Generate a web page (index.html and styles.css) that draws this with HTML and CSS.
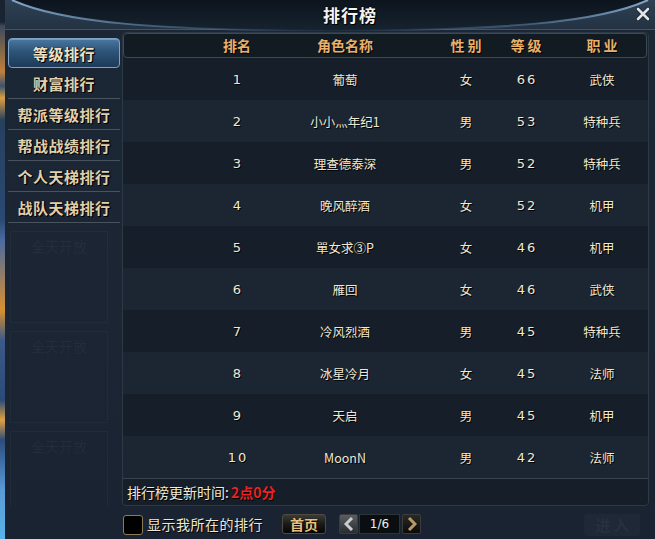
FILE: index.html
```html
<!DOCTYPE html>
<html lang="zh-CN">
<head>
<meta charset="utf-8">
<title>排行榜</title>
<link rel="stylesheet" href="styles.css">
</head>
<body>
<div class="window">
  <header class="titlebar">
    <svg class="arc" width="655" height="31" viewBox="0 0 655 31">
      <defs>
        <linearGradient id="arcStroke" x1="0" y1="0" x2="1" y2="0">
          <stop offset="0" stop-color="#8fb4d8" stop-opacity="0.9"/>
          <stop offset="0.25" stop-color="#5f86ad" stop-opacity="0.5"/>
          <stop offset="0.5" stop-color="#3e5a78" stop-opacity="0.2"/>
          <stop offset="0.8" stop-color="#5f86ad" stop-opacity="0.5"/>
          <stop offset="1" stop-color="#8fb4d8" stop-opacity="0.9"/>
        </linearGradient>
        <linearGradient id="arcFill" x1="0" y1="0" x2="0" y2="1">
          <stop offset="0" stop-color="#0c141d"/>
          <stop offset="1" stop-color="#172330"/>
        </linearGradient>
      </defs>
      <path d="M 12 0 C 60 22 150 30 330 31 C 510 30 600 22 648 0 Z" fill="url(#arcFill)"/>
      <path d="M 12 0 C 60 22 150 30 330 31 C 510 30 600 22 648 0" fill="none" stroke="url(#arcStroke)" stroke-width="2"/>
    </svg>
    <h1 class="title">排行榜</h1>
    <span class="close">
      <svg width="14" height="14" viewBox="0 0 14 14">
        <path d="M2 2 L12 12 M12 2 L2 12" stroke="#1a222c" stroke-width="4.5" stroke-linecap="round"/>
        <path d="M2 2 L12 12 M12 2 L2 12" stroke="#dfe4ea" stroke-width="2.6" stroke-linecap="round"/>
      </svg>
    </span>
  </header>

  <div class="content">
    <nav class="tabs">
      <div class="tab active">等级排行</div>
      <div class="tab">财富排行</div>
      <div class="tab">帮派等级排行</div>
      <div class="tab">帮战战绩排行</div>
      <div class="tab">个人天梯排行</div>
      <div class="tab">战队天梯排行</div>
      <div class="ghost">
        <div class="ghost-item">全天开放</div>
        <div class="ghost-item">全天开放</div>
        <div class="ghost-item">全天开放</div>
      </div>
    </nav>

    <section class="panel">
      <div class="thead">
        <span>排名</span><span>角色名称</span><span>性 别</span><span>等 级</span><span>职 业</span>
      </div>
      <div class="tbody">
        <div class="row"><span class="num">1</span><span>葡萄</span><span>女</span><span class="num">66</span><span>武侠</span></div>
        <div class="row"><span class="num">2</span><span>小小灬年纪1</span><span>男</span><span class="num">53</span><span>特种兵</span></div>
        <div class="row"><span class="num">3</span><span>理查德泰深</span><span>男</span><span class="num">52</span><span>特种兵</span></div>
        <div class="row"><span class="num">4</span><span>晚风醉酒</span><span>女</span><span class="num">52</span><span>机甲</span></div>
        <div class="row"><span class="num">5</span><span>單女求③P</span><span>女</span><span class="num">46</span><span>机甲</span></div>
        <div class="row"><span class="num">6</span><span>雁回</span><span>女</span><span class="num">46</span><span>武侠</span></div>
        <div class="row"><span class="num">7</span><span>冷风烈酒</span><span>男</span><span class="num">45</span><span>特种兵</span></div>
        <div class="row"><span class="num">8</span><span>冰星冷月</span><span>女</span><span class="num">45</span><span>法师</span></div>
        <div class="row"><span class="num">9</span><span>天启</span><span>男</span><span class="num">45</span><span>机甲</span></div>
        <div class="row"><span class="num">10</span><span>MoonN</span><span>男</span><span class="num">42</span><span>法师</span></div>
      </div>
      <div class="update">排行榜更新时间:<span class="red">2点0分</span></div>
    </section>
  </div>

  <footer class="bottombar">
    <span class="checkbox"></span>
    <span class="check-label">显示我所在的排行</span>
    <span class="btn-first">首页</span>
    <span class="pager">
      <span class="arrow prev">
        <svg width="10" height="14" viewBox="0 0 10 14"><path d="M8 1 L2 7 L8 13" fill="none" stroke="#c9ccd0" stroke-width="3"/></svg>
      </span>
      <span class="pagenum">1/6</span>
      <span class="arrow next">
        <svg width="10" height="14" viewBox="0 0 10 14"><path d="M2 1 L8 7 L2 13" fill="none" stroke="#b89a68" stroke-width="3"/></svg>
      </span>
    </span>
    <span class="enter">进 入</span>
  </footer>
</div>
</body>
</html>
```

FILE: styles.css
```css
html, body {
  margin: 0;
  padding: 0;
}

body {
  width: 655px;
  height: 539px;
  overflow: hidden;
  font-family: "Noto Sans CJK SC", "Noto Sans", sans-serif;
  background:
    linear-gradient(to bottom,
      #1a2330 0, #1a2330 22px, #3b4a5c 26px, #c0803a 72px, #3a5372 86px,
      #dca040 98px, #26405e 120px, #2a4a74 220px, #4a6aa0 240px,
      #d89030 310px, #3c5a88 340px, #2a4a78 400px, #e0a040 420px,
      #2c4c7c 440px, #5a9ad8 490px, #58b4e8 539px) 0 0 / 5px 100% no-repeat,
    linear-gradient(to bottom, #1c2736, #1b2533 60%, #1a2331);
}

.window {
  width: 655px;
  height: 539px;
  display: grid;
  grid-template-rows: 30px 476px 33px;
  overflow: hidden;
}

/* ---------- title bar ---------- */
.titlebar {
  position: relative;
  display: flex;
  align-items: center;
  justify-content: center;
  background: linear-gradient(to bottom, #2f4154, #223243);
  border-bottom: 1px solid #3d5670;
  box-sizing: border-box;
  margin-left: 5px;
}

.arc {
  position: absolute;
  left: -5px;
  top: 0;
}

.title {
  position: relative;
  margin: 0;
  padding-left: 40px;
  font-size: 17px;
  font-weight: 700;
  color: #f4f4f4;
  letter-spacing: 1px;
  text-shadow: 1px 1px 0 #000, 0 0 2px #000;
  line-height: 30px;
}

.close {
  position: absolute;
  right: 5px;
  top: 7px;
  width: 14px;
  height: 14px;
  display: block;
}

.close svg {
  display: block;
}

/* ---------- content ---------- */
.content {
  display: grid;
  grid-template-columns: 120px 527px;
  column-gap: 2px;
  overflow: hidden;
}

.tabs {
  padding: 8px 0 0 8px;
  display: flex;
  flex-direction: column;
  overflow: hidden;
  min-height: 0;
}

.tab {
  flex: none;
  height: 30px;
  border-bottom: 1px solid #48535e;
  display: flex;
  align-items: center;
  justify-content: center;
  font-size: 15px;
  font-weight: 700;
  color: #e2d0ac;
  letter-spacing: 0.5px;
  text-shadow: 1px 1px 0 #000, 1px 0 1px #000;
}

.tab.active {
  box-sizing: border-box;
  height: 30px;
  border: 1px solid #7ea3c4;
  border-radius: 4px;
  background: linear-gradient(to bottom, #4b77a0 0%, #2d5478 45%, #1d3a58 100%);
  box-shadow: inset 0 1px 0 rgba(200, 225, 250, 0.35);
  color: #efe2c2;
}

.ghost {
  flex: none;
  margin-top: 8px;
  display: flex;
  flex-direction: column;
  gap: 8px;
  padding-left: 2px;
}

.ghost-item {
  width: 98px;
  height: 92px;
  box-sizing: border-box;
  border: 1px solid rgba(70, 90, 110, 0.14);
  font-size: 14px;
  color: rgba(120, 140, 160, 0.1);
  text-align: center;
  padding-top: 4px;
}

/* ---------- panel ---------- */
.panel {
  margin-top: 2px;
  height: 474px;
  box-sizing: border-box;
  border: 1px solid #2c3946;
  border-radius: 4px;
  display: flex;
  flex-direction: column;
  background: #19232f;
}

.thead {
  flex: none;
  height: 25px;
  box-sizing: border-box;
  border: 1px solid #3b4955;
  border-radius: 4px;
  background: #121b22;
  display: grid;
  grid-template-columns: 34px 182px 60px 60px 92px;
  padding-left: 96px;
  align-items: center;
  margin-right: 1px;
}

.thead span {
  text-align: center;
  font-size: 14px;
  font-weight: 700;
  color: #e9b06a;
  white-space: nowrap;
  text-shadow: 1px 1px 0 #000;
  line-height: 23px;
}

.tbody {
  flex: none;
  display: flex;
  flex-direction: column;
}

.row {
  height: 42px;
  display: grid;
  grid-template-columns: 34px 182px 60px 60px 92px;
  padding-left: 97px;
  align-items: center;
  background: #161f29;
}

.row:nth-child(even) {
  background: #1c2632;
}

.row span {
  text-align: center;
  white-space: nowrap;
  font-size: 12.5px;
  color: #f1e7d3;
  text-shadow: 1px 1px 0 #000;
}

.row .num {
  font-family: "DejaVu Sans", sans-serif;
  font-size: 13px;
  letter-spacing: 2px;
  padding-left: 2px;
}

.update {
  border-top: 1px solid #36434f;
  flex: 1;
  display: flex;
  align-items: center;
  padding-left: 4px;
  font-size: 14px;
  color: #f1e8d6;
  text-shadow: 1px 1px 0 #000;
  background: #161f29;
  border-radius: 0 0 4px 4px;
}

.red {
  color: #ee2222;
  font-weight: 700;
  margin-left: 2px;
}

/* ---------- bottom bar ---------- */
.bottombar {
  display: flex;
  align-items: center;
  padding-left: 123px;
  overflow: hidden;
}

.checkbox {
  width: 20px;
  height: 20px;
  box-sizing: border-box;
  border: 1px solid #8d7b52;
  border-radius: 3px;
  background: #000;
  margin-top: 4px;
}

.check-label {
  margin-left: 4px;
  font-size: 14px;
  color: #efe7d6;
  text-shadow: 1px 1px 0 #000;
  margin-top: 2px;
  letter-spacing: 0.5px;
}

.btn-first {
  margin-left: 19px;
  width: 44px;
  height: 20px;
  box-sizing: border-box;
  border: 1px solid #4e4a40;
  border-radius: 3px;
  background: linear-gradient(to bottom, #3a3a36 0%, #1a1a18 50%, #050505 100%);
  color: #e8c27a;
  font-size: 14px;
  font-weight: 700;
  display: flex;
  align-items: center;
  justify-content: center;
  text-shadow: 1px 1px 0 #000;
  margin-top: 2px;
}

.pager {
  margin-left: 13px;
  display: flex;
  align-items: center;
  gap: 1px;
  margin-top: 2px;
}

.arrow {
  width: 19px;
  height: 20px;
  box-sizing: border-box;
  border: 1px solid #3c3c3c;
  border-radius: 2px;
  display: flex;
  align-items: center;
  justify-content: center;
}

.arrow.prev {
  background: linear-gradient(to bottom, #5a5e62, #2a2c2e);
}

.arrow.next {
  background: linear-gradient(to bottom, #2a2824, #0c0b0a);
  margin-left: 1px;
}

.arrow svg {
  display: block;
}

.pagenum {
  width: 41px;
  height: 20px;
  box-sizing: border-box;
  border: 1px solid #2e3338;
  background: #0b0e11;
  color: #eeeeee;
  font-family: "DejaVu Sans", sans-serif;
  font-size: 12px;
  display: flex;
  align-items: center;
  justify-content: center;
}

.enter {
  margin-left: auto;
  margin-right: 15px;
  width: 56px;
  height: 22px;
  border-radius: 3px;
  background: rgba(40, 52, 66, 0.35);
  color: #26313e;
  font-size: 15px;
  font-weight: 700;
  display: flex;
  align-items: center;
  justify-content: center;
  margin-top: 4px;
}
```
